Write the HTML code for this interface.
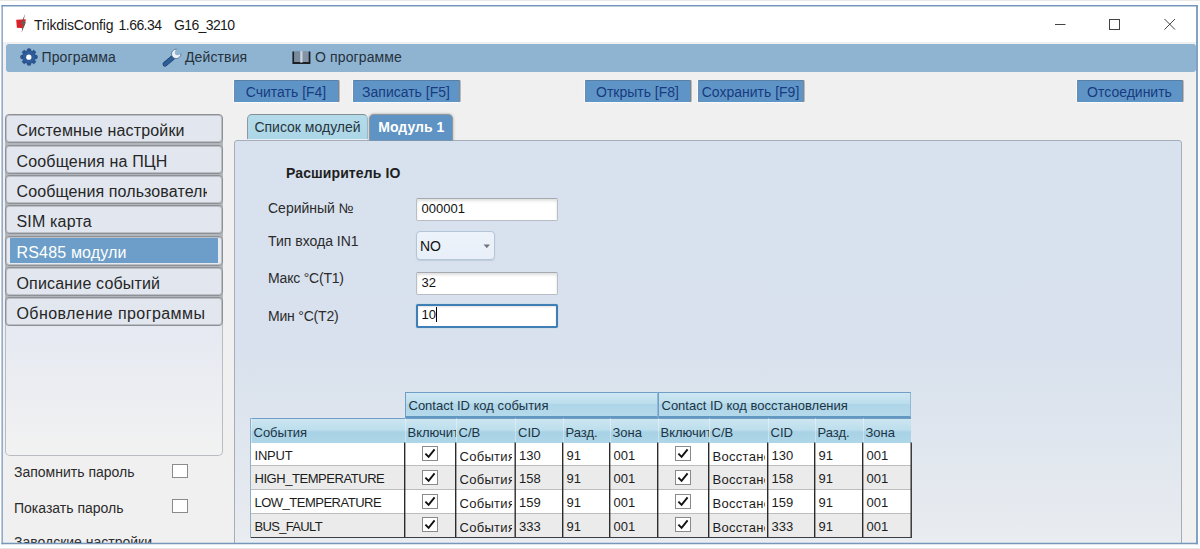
<!DOCTYPE html>
<html lang="ru">
<head>
<meta charset="utf-8">
<title>TrikdisConfig 1.66.34 G16_3210</title>
<style>
*{box-sizing:border-box;margin:0;padding:0}
html,body{width:1200px;height:549px;overflow:hidden;background:#fff}
body{position:relative;font-family:"Liberation Sans",sans-serif;font-size:14px;color:#2b2b2b;-webkit-font-smoothing:antialiased}
.abs{position:absolute}
.t{position:absolute;white-space:pre;line-height:1}
#edgeT{left:0;top:0;width:1200px;height:1px;background:#e9e9e7}
#edgeB{left:0;top:548px;width:1200px;height:1px;background:#e6e6e6}
#win{left:3px;top:7px;width:1193px;height:536px;background:#f0f0f0}
#titlebar{left:3px;top:7px;width:1193px;height:35px;background:#fff}
#frame{left:0;top:0;width:1200px;height:549px}
#menubar{left:6px;top:44px;width:1190px;height:28px;background:#8eb4d2;border-radius:3px}
.menu{font-size:14px;color:#27313b;letter-spacing:.12px}
.btn{position:absolute;top:80px;height:22px;background:#5f95c6;border-top:1px solid #587fa6;border-radius:1px;box-shadow:inset 1px 0 0 #6a8db0, 1.5px 0 0.5px #7b8791, 0 1px 1px #fbfbfb, -1px 0 1px #fbfbfb;color:#173a80;font-size:14px;text-align:center;line-height:22px;white-space:pre}
#side{left:5px;top:120px;width:218px;height:336px;border:1px solid #b9bcc0;border-top:none;border-radius:0 0 5px 5px;background:linear-gradient(#e5e9f2 61%,#ecedf2 80%,#f2f2f2 100%)}
.sb{position:absolute;left:5px;width:218px;height:29px;border:1px solid #8d9095;border-radius:4px;background:#e1e6ef;box-shadow:inset 0 0 0 1px #bcc0c6;font-size:16px;letter-spacing:.17px;color:#262626;line-height:31px;padding-left:10.5px;white-space:pre;overflow:hidden}
.sb b{font-weight:400;display:block;width:190px;overflow:hidden;letter-spacing:.1px}
.sb.sel{background:#e6ebf2}
.sb.sel i{position:absolute;left:4px;top:1px;right:4px;bottom:2px;background:#6c9ec9}
.sb.sel span{position:relative;color:#fff}
.chk{position:absolute;width:16px;height:14px;border:1px solid #8b8b8b;background:#fff}
#panel{left:234px;top:140px;width:948px;height:404px;border:1px solid #a5adb9;border-radius:3px 3px 0 0;background:linear-gradient(#d8e1ee 0%,#d8e1ed 52%,#e9ecf0 100%)}
.tab{position:absolute;top:114px;height:27px;border-radius:5px 5px 0 0;font-size:14px;line-height:26px;text-align:center;white-space:pre}
#tab1{left:247px;width:121px;height:25px;line-height:24px;background:linear-gradient(#b4dbea,#acd7e7);border:1px solid #8d989f;border-top-color:#828d95;border-right-color:#a4bcc8;border-bottom:none;color:#27343d;box-shadow:0 1px 0 #e9eff6}
#tab2{left:370px;top:115px;width:81.5px;height:26px;background:#5e93c3;color:#fff;font-weight:700;line-height:25px;text-indent:1px;border-radius:4px 4px 0 0;box-shadow:0 0 0 1px #8f979f,0 0 2.5px 1px rgba(90,90,90,.55);clip-path:inset(-5px -5px 0.5px -5px)}
.lbl{font-size:14px;color:#2b2b2b}
.inp{position:absolute;left:416px;width:142px;height:23px;background:#fff;border:1px solid #b9bdc4;border-top-color:#a4a9b0;border-radius:2px;font-size:13px;line-height:19.5px;padding-left:4.5px;color:#111;box-shadow:inset 0 2px 3px rgba(0,0,0,.13)}
#dd{left:416px;top:231px;width:79px;height:29px;border:1px solid #b3c6d8;border-radius:4px;background:linear-gradient(#edf3fa,#e8eff8);box-shadow:0 1px 1px rgba(150,165,185,.35);font-size:14px;line-height:28px;padding-left:3px;color:#111}

#grid div{position:absolute}
#grid{font-size:13px;color:#1c1c1c}
.gh{background:linear-gradient(#cfe7f2 0%,#bcdeec 45%,#aed6e8 50%,#b4d9ea 100%);border:1px solid #6f9fc6;border-bottom:2px solid #6197c0;border-right-color:#8fb9d6;line-height:26px;color:#1d3445;white-space:pre}
.gh span{margin-left:3px}
.hrow{background:linear-gradient(#cde6f1 0%,#bcdeec 46%,#a8d2e5 54%,#aed6e8 100%);border-top:1px solid #6f9fc6}
.hc{line-height:30px;color:#1d3445;white-space:pre;overflow:hidden;border-left:1px solid rgba(255,255,255,.35)}
.hc span{margin-left:2px}
.row.r0{background:#fff}
.row.r1{background:#ebebeb}
.row{border-bottom:1px solid #bdbdbd}
.c{top:0;height:100%;line-height:25px;padding-left:4px;white-space:pre;overflow:hidden}
.c .nm{letter-spacing:-0.45px}
.cc{padding-left:0}
.cb{position:absolute;left:17.5px;top:3.5px}
.cl{padding-left:4px}
.cl span{display:block;width:52px;overflow:hidden;position:relative;top:1.2px;letter-spacing:.3px}
.vl{width:1.4px;background:#262626}
.bl{height:1.3px;background:#3a3f45}
.ll{width:1px;background:#8fb0c8}
</style>
</head>
<body>
<div class="abs" id="edgeT"></div>
<div class="abs" id="edgeB"></div>
<div class="abs" id="win"></div>
<div class="abs" id="titlebar"></div>

<!-- TITLE -->
<svg class="abs" style="left:14px;top:12px" width="14" height="22" viewBox="0 0 14 22">
  <path d="M2.2 7.7 L11.8 7.2 L11 12.4 L9 16.3 L2.9 15.7 Z" fill="#dc2229"/>
  <path d="M11.2 1.8 L9.4 9.2 L11.7 10.2 L7.6 20.8 L8.7 12.2 L6.9 11.6 Z" fill="#6a5a58"/>
</svg>
<div class="t" id="title" style="left:0;top:17.5px;font-size:14px;color:#1a1a1a"><span style="position:absolute;left:34px;letter-spacing:-.13px">TrikdisConfig</span><span style="position:absolute;left:118.6px;letter-spacing:-.56px">1.66.34</span><span style="position:absolute;left:174px;letter-spacing:-.62px">G16_3210</span></div>
<svg class="abs" style="left:1050px;top:14px" width="130" height="20" viewBox="0 0 130 20" fill="none" stroke="#444" stroke-width="1">
  <path d="M5 10.5H15.5"/>
  <rect x="59.5" y="5.5" width="10" height="10"/>
  <path d="M114.5 5 L125 15.5 M125 5 L114.5 15.5"/>
</svg>

<!-- MENU -->
<div class="abs" id="menubar"></div>
<svg class="abs" style="left:19.8px;top:47.9px" width="19" height="18" viewBox="0 0 19 18">
  <g fill="#2c5893" stroke="#23477b" stroke-width="0.6">
    <rect x="7.3" y="0.7" width="3.4" height="4" rx="0.9" transform="rotate(0 9 9)"/><rect x="7.3" y="0.7" width="3.4" height="4" rx="0.9" transform="rotate(45 9 9)"/><rect x="7.3" y="0.7" width="3.4" height="4" rx="0.9" transform="rotate(90 9 9)"/><rect x="7.3" y="0.7" width="3.4" height="4" rx="0.9" transform="rotate(135 9 9)"/><rect x="7.3" y="0.7" width="3.4" height="4" rx="0.9" transform="rotate(180 9 9)"/><rect x="7.3" y="0.7" width="3.4" height="4" rx="0.9" transform="rotate(225 9 9)"/><rect x="7.3" y="0.7" width="3.4" height="4" rx="0.9" transform="rotate(270 9 9)"/><rect x="7.3" y="0.7" width="3.4" height="4" rx="0.9" transform="rotate(315 9 9)"/>
    <circle cx="9" cy="9" r="6.4"/>
  </g>
  <circle cx="9" cy="9" r="6" fill="#2f5c9a"/>
  <circle cx="8.8" cy="9.2" r="2.6" fill="#fff"/>
</svg>
<div class="t menu" style="left:41.5px;top:49.6px">Программа</div>
<svg class="abs" style="left:160px;top:46px" width="24" height="22" viewBox="0 0 24 22">
  <path d="M5 18.2 L13.4 11.2" stroke="#20426f" stroke-width="4.8" stroke-linecap="round" fill="none"/>
  <path d="M5 18.2 L13.4 11.2" stroke="#2f5f9b" stroke-width="3.2" stroke-linecap="round" fill="none"/>
  <circle cx="16.2" cy="7.9" r="4.7" fill="#eef2f7" stroke="#5a7b9e" stroke-width="1"/>
  <path d="M15.6 5.2 L19 1.2 L23 5.6 L19.2 8.6 Z" fill="#8eb4d2"/>
  <circle cx="17.5" cy="6.5" r="2.7" fill="#8eb4d2"/>
</svg>
<div class="t menu" style="left:185px;top:49.6px">Действия</div>
<svg class="abs" style="left:292px;top:50px" width="19" height="15" viewBox="0 0 19 15">
  <path d="M1.4 1.6 V13 H17.4 V1.6" fill="none" stroke="#1b2026" stroke-width="2"/>
  <path d="M2.4 1.6 Q5.6 0.2 8.8 1.6 V12 H2.4 Z" fill="#7a8b9d"/>
  <path d="M10 1.6 Q13.2 0.2 16.4 1.6 V12 H10 Z" fill="#8394a6"/>
  <path d="M8.3 1.2 H10.5 V12.6 H8.3 Z" fill="#cdd5dd"/>
</svg>
<div class="t menu" style="left:315px;top:49.6px">О программе</div>

<!-- TOOLBAR BUTTONS -->
<div class="btn" style="left:234px;width:104px">Считать [F4]</div>
<div class="btn" style="left:353px;width:106px">Записать [F5]</div>
<div class="btn" style="left:585px;width:105px">Открыть [F8]</div>
<div class="btn" style="left:698px;width:105px">Сохранить [F9]</div>
<div class="btn" style="left:1077px;width:105px">Отсоединить</div>

<!-- SIDEBAR -->
<div class="abs" id="side"></div>
<div class="abs" style="left:5px;top:116px;width:218px;height:208px;background:#b3b6bb;border-radius:4px"></div>
<div class="sb" style="top:114px">Системные настройки</div>
<div class="sb" style="top:145px">Сообщения на ПЦН</div>
<div class="sb" style="top:175px"><b>Сообщения пользователю</b></div>
<div class="sb" style="top:205px">SIM карта</div>
<div class="sb sel" style="top:236px;height:30px"><i></i><span>RS485 модули</span></div>
<div class="sb" style="top:267px">Описание событий</div>
<div class="sb" style="top:297px;letter-spacing:.42px">Обновление программы</div>

<div class="t lbl" style="left:14px;top:465px">Запомнить пароль</div>
<div class="chk" style="left:172px;top:464px"></div>
<div class="t lbl" style="left:14px;top:501px">Показать пароль</div>
<div class="chk" style="left:172px;top:499px"></div>
<div class="abs" style="left:3px;top:530px;width:228px;height:13px;overflow:hidden"><div class="t lbl" style="left:11px;top:5px">Заводские настройки</div></div>

<!-- TABS + PANEL -->
<div class="abs" id="panel"></div>
<div class="tab" id="tab1">Список модулей</div>
<div class="tab" id="tab2">Модуль 1</div>

<div class="t" style="left:286px;top:166px;font-size:14px;font-weight:700;color:#1e1e1e;letter-spacing:.1px">Расширитель IO</div>
<div class="t lbl" style="left:268px;top:201.3px">Серийный №</div>
<div class="t lbl" style="left:268px;top:234.3px">Тип входа IN1</div>
<div class="t lbl" style="left:268px;top:270.5px;letter-spacing:-.22px">Макс °C(T1)</div>
<div class="t lbl" style="left:268px;top:308.5px;letter-spacing:-.2px">Мин °C(T2)</div>

<div class="inp" style="top:198px">000001</div>
<div class="abs" id="dd">NO<svg class="abs" style="left:66px;top:11.5px" width="7.6" height="4.6" viewBox="0 0 8 5"><path d="M0.5 0.5 H7.5 L4 4.5 Z" fill="#6b7480"/></svg></div>
<div class="inp" style="top:271.5px">32</div>
<div class="inp" style="top:304px;height:24px;border:2px solid #3f7fb5;border-radius:2px;line-height:17.5px;padding-left:3.5px;box-shadow:inset 0 1px 2px rgba(0,0,0,.12),0 0 1px #7fa8cc">10<span style="display:inline-block;width:1px;height:15px;background:#000;vertical-align:-3px"></span></div>

<!-- TABLE placeholder -->
<div id="grid">
<div class="gh" style="left:404.5px;top:392px;width:253.0px;height:26px"><span>Contact ID код события</span></div>
<div class="gh" style="left:657.5px;top:392px;width:253.5px;height:26px"><span>Contact ID код восстановления</span></div>
<div class="hrow" style="left:250.5px;top:418px;width:660.5px;height:24.5px"></div>
<div class="hc" style="left:250.5px;top:418px;width:154.0px;height:24.5px"><span>События</span></div>
<div class="hc" style="left:404.5px;top:418px;width:51.0px;height:24.5px"><span>Включить</span></div>
<div class="hc" style="left:455.5px;top:418px;width:59.5px;height:24.5px"><span>С/В</span></div>
<div class="hc" style="left:515px;top:418px;width:47.5px;height:24.5px"><span>CID</span></div>
<div class="hc" style="left:562.5px;top:418px;width:47.0px;height:24.5px"><span>Разд.</span></div>
<div class="hc" style="left:609.5px;top:418px;width:48.0px;height:24.5px"><span>Зона</span></div>
<div class="hc" style="left:657.5px;top:418px;width:51.0px;height:24.5px"><span>Включить</span></div>
<div class="hc" style="left:708.5px;top:418px;width:59.0px;height:24.5px"><span>С/В</span></div>
<div class="hc" style="left:767.5px;top:418px;width:47.0px;height:24.5px"><span>CID</span></div>
<div class="hc" style="left:814.5px;top:418px;width:48.0px;height:24.5px"><span>Разд.</span></div>
<div class="hc" style="left:862.5px;top:418px;width:48.5px;height:24.5px"><span>Зона</span></div>
<div class="row r0" style="left:250.5px;top:442.5px;width:660.5px;height:23.75px">
<div class="c" style="left:0.0px;width:154.0px"><span style="letter-spacing:-0.2px">INPUT</span></div>
<div class="c cc" style="left:154.0px;width:51.0px"><svg class="cb" width="16" height="15" viewBox="0 0 16 15"><rect x="0.5" y="0.5" width="15" height="14" fill="#fff" stroke="#8a8a8a"/><path d="M3.4 7.6 L6.6 10.8 L12.6 3.4" fill="none" stroke="#111" stroke-width="1.9"/></svg></div>
<div class="c cl" style="left:205.0px;width:59.5px"><span>События</span></div>
<div class="c" style="left:264.5px;width:47.5px">130</div>
<div class="c" style="left:312.0px;width:47.0px">91</div>
<div class="c" style="left:359.0px;width:48.0px">001</div>
<div class="c cc" style="left:407.0px;width:51.0px"><svg class="cb" width="16" height="15" viewBox="0 0 16 15"><rect x="0.5" y="0.5" width="15" height="14" fill="#fff" stroke="#8a8a8a"/><path d="M3.4 7.6 L6.6 10.8 L12.6 3.4" fill="none" stroke="#111" stroke-width="1.9"/></svg></div>
<div class="c cl" style="left:458.0px;width:59.0px"><span>Восстановление</span></div>
<div class="c" style="left:517.0px;width:47.0px">130</div>
<div class="c" style="left:564.0px;width:48.0px">91</div>
<div class="c" style="left:612.0px;width:48.5px">001</div>
</div>
<div class="row r1" style="left:250.5px;top:466.25px;width:660.5px;height:23.75px">
<div class="c" style="left:0.0px;width:154.0px"><span style="letter-spacing:-0.45px">HIGH_TEMPERATURE</span></div>
<div class="c cc" style="left:154.0px;width:51.0px"><svg class="cb" width="16" height="15" viewBox="0 0 16 15"><rect x="0.5" y="0.5" width="15" height="14" fill="#fff" stroke="#8a8a8a"/><path d="M3.4 7.6 L6.6 10.8 L12.6 3.4" fill="none" stroke="#111" stroke-width="1.9"/></svg></div>
<div class="c cl" style="left:205.0px;width:59.5px"><span>События</span></div>
<div class="c" style="left:264.5px;width:47.5px">158</div>
<div class="c" style="left:312.0px;width:47.0px">91</div>
<div class="c" style="left:359.0px;width:48.0px">001</div>
<div class="c cc" style="left:407.0px;width:51.0px"><svg class="cb" width="16" height="15" viewBox="0 0 16 15"><rect x="0.5" y="0.5" width="15" height="14" fill="#fff" stroke="#8a8a8a"/><path d="M3.4 7.6 L6.6 10.8 L12.6 3.4" fill="none" stroke="#111" stroke-width="1.9"/></svg></div>
<div class="c cl" style="left:458.0px;width:59.0px"><span>Восстановление</span></div>
<div class="c" style="left:517.0px;width:47.0px">158</div>
<div class="c" style="left:564.0px;width:48.0px">91</div>
<div class="c" style="left:612.0px;width:48.5px">001</div>
</div>
<div class="row r0" style="left:250.5px;top:490px;width:660.5px;height:23.75px">
<div class="c" style="left:0.0px;width:154.0px"><span style="letter-spacing:-0.5px">LOW_TEMPERATURE</span></div>
<div class="c cc" style="left:154.0px;width:51.0px"><svg class="cb" width="16" height="15" viewBox="0 0 16 15"><rect x="0.5" y="0.5" width="15" height="14" fill="#fff" stroke="#8a8a8a"/><path d="M3.4 7.6 L6.6 10.8 L12.6 3.4" fill="none" stroke="#111" stroke-width="1.9"/></svg></div>
<div class="c cl" style="left:205.0px;width:59.5px"><span>События</span></div>
<div class="c" style="left:264.5px;width:47.5px">159</div>
<div class="c" style="left:312.0px;width:47.0px">91</div>
<div class="c" style="left:359.0px;width:48.0px">001</div>
<div class="c cc" style="left:407.0px;width:51.0px"><svg class="cb" width="16" height="15" viewBox="0 0 16 15"><rect x="0.5" y="0.5" width="15" height="14" fill="#fff" stroke="#8a8a8a"/><path d="M3.4 7.6 L6.6 10.8 L12.6 3.4" fill="none" stroke="#111" stroke-width="1.9"/></svg></div>
<div class="c cl" style="left:458.0px;width:59.0px"><span>Восстановление</span></div>
<div class="c" style="left:517.0px;width:47.0px">159</div>
<div class="c" style="left:564.0px;width:48.0px">91</div>
<div class="c" style="left:612.0px;width:48.5px">001</div>
</div>
<div class="row r1" style="left:250.5px;top:513.75px;width:660.5px;height:23.75px">
<div class="c" style="left:0.0px;width:154.0px"><span style="letter-spacing:-0.67px">BUS_FAULT</span></div>
<div class="c cc" style="left:154.0px;width:51.0px"><svg class="cb" width="16" height="15" viewBox="0 0 16 15"><rect x="0.5" y="0.5" width="15" height="14" fill="#fff" stroke="#8a8a8a"/><path d="M3.4 7.6 L6.6 10.8 L12.6 3.4" fill="none" stroke="#111" stroke-width="1.9"/></svg></div>
<div class="c cl" style="left:205.0px;width:59.5px"><span>События</span></div>
<div class="c" style="left:264.5px;width:47.5px">333</div>
<div class="c" style="left:312.0px;width:47.0px">91</div>
<div class="c" style="left:359.0px;width:48.0px">001</div>
<div class="c cc" style="left:407.0px;width:51.0px"><svg class="cb" width="16" height="15" viewBox="0 0 16 15"><rect x="0.5" y="0.5" width="15" height="14" fill="#fff" stroke="#8a8a8a"/><path d="M3.4 7.6 L6.6 10.8 L12.6 3.4" fill="none" stroke="#111" stroke-width="1.9"/></svg></div>
<div class="c cl" style="left:458.0px;width:59.0px"><span>Восстановление</span></div>
<div class="c" style="left:517.0px;width:47.0px">333</div>
<div class="c" style="left:564.0px;width:48.0px">91</div>
<div class="c" style="left:612.0px;width:48.5px">001</div>
</div>
<svg class="abs" style="left:0;top:0" width="1200" height="549" viewBox="0 0 1200 549" stroke="#262626" stroke-width="1.35">
<path d="M404.7 442.5 V537.5"/>
<path d="M455.7 442.5 V537.5"/>
<path d="M515.2 442.5 V537.5"/>
<path d="M562.7 442.5 V537.5"/>
<path d="M609.7 442.5 V537.5"/>
<path d="M657.7 442.5 V537.5"/>
<path d="M708.7 442.5 V537.5"/>
<path d="M767.7 442.5 V537.5"/>
<path d="M814.7 442.5 V537.5"/>
<path d="M862.7 442.5 V537.5"/>
<path d="M911.2 442.5 V537.5"/>
</svg>
<div class="bl" style="left:250.5px;top:537.0px;width:661.2px"></div>
<div class="ll" style="left:250.0px;top:418px;height:119.5px"></div>
</div>

<!-- WINDOW FRAME -->
<svg class="abs" id="frame" viewBox="0 0 1200 549" fill="none" stroke="#7697bb">
  <path d="M2.15 5.1 V544.2" stroke-width="1.3"/>
  <path d="M1.5 5.85 H1197.9" stroke-width="1.5"/>
  <path d="M1197 5.1 V544.2" stroke-width="1.8"/>
  <path d="M1.5 543.45 H1197.9" stroke-width="1.5"/>
</svg>
</body>
</html>
